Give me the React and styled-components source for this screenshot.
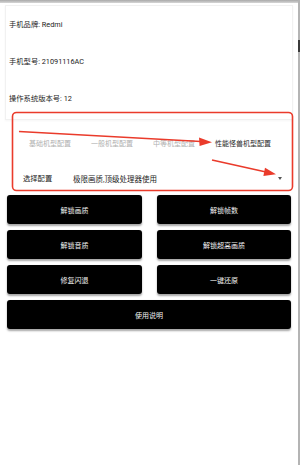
import React from 'react'
import styled, { createGlobalStyle } from 'styled-components'

const GlobalStyle = createGlobalStyle`
html, body {
  margin: 0;
  padding: 0;
  background: #ffffff;
}
body {
  font-family: Roboto, "Noto Sans CJK SC", sans-serif;
}
`

const Screen = styled.div`
position: relative;
width: 300px;
height: 465px;
display: flex;
flex-direction: row;
overflow: hidden;
background: #ffffff;
`

const Main = styled.div`
width: 298px;
display: flex;
flex-direction: column;
`

const Edge = styled.div`
width: 2px;
background: #b4b4b4;
display: flex;
flex-direction: column;
`

const EdgeThumb = styled.div`
margin-top: 40px;
height: 12px;
background: #3a3a3a;
`

const TopShade = styled.div`
height: 3px;
background: linear-gradient(#a9a9a9, #d6d6d6);
`

const InfoCard = styled.div`
margin: 2px 5px 0 5px;
padding: 13px 3px 14px 3px;
border: 1px solid #f1f1f1;
box-shadow: 0 1px 2px rgba(0, 0, 0, 0.04);
display: flex;
flex-direction: column;
gap: 25px;
`

const InfoLine = styled.div`
font-size: 7.3px;
line-height: 12px;
color: #222;
`

const TabRow = styled.div`
margin-top: 17px;
padding-left: 19px;
display: flex;
flex-direction: row;
`

const Tab = styled.div`
padding: 0 10px;
font-size: 7px;
line-height: 14px;
white-space: nowrap;
color: ${({ active }) => (active ? '#2a2a2a' : '#b0b0b0')};
&:first-child { padding-left: 10px; }
`

const SelectRow = styled.div`
margin-top: 20px;
margin-left: 23px;
margin-right: 16px;
display: flex;
flex-direction: row;
align-items: center;
height: 14px;
font-size: 7.3px;
color: #222;
`

const SelectLabel = styled.div`
width: 50px;
`

const SelectValue = styled.div`
flex: 1;
font-size: 7.5px;
`

const Caret = styled.div`
width: 0;
height: 0;
border-left: 2.5px solid transparent;
border-right: 2.5px solid transparent;
border-top: 3px solid #555;
margin-top: 1px;
`

const ButtonGrid = styled.div`
margin: 10px 7px 0 7px;
display: grid;
grid-template-columns: 135px 134px;
column-gap: 15px;
row-gap: 6px;
`

const ActionButton = styled.div`
grid-column: ${({ wide }) => (wide ? '1 / span 2' : 'auto')};
height: 29px;
background: #000;
border-radius: 3px;
box-shadow: 0 1.5px 2px rgba(0, 0, 0, 0.35);
color: #f2f2f2;
font-size: 7px;
display: flex;
align-items: center;
justify-content: center;
`

const Annotation = styled.svg`
position: absolute;
left: 0;
top: 0;
width: 300px;
height: 465px;
pointer-events: none;
`

const info = ['手机品牌: Redmi', '手机型号: 21091116AC', '操作系统版本号: 12']
const tabs = ['基础机型配置', '一般机型配置', '中等机型配置', '性能怪兽机型配置']
const actions = ['解锁画质', '解锁帧数', '解锁音质', '解锁超高画质', '修复闪退', '一键还原']

function App() {
  return (
    <Screen>
      <GlobalStyle />
      <Main>
        <TopShade />
        <InfoCard>
          {info.map((line, i) => (
            <InfoLine key={i}>{line}</InfoLine>
          ))}
        </InfoCard>
        <TabRow>
          {tabs.map((t, i) => (
            <Tab key={i} active={i === 3}>{t}</Tab>
          ))}
        </TabRow>
        <SelectRow>
          <SelectLabel>选择配置</SelectLabel>
          <SelectValue>极限画质,顶级处理器使用</SelectValue>
          <Caret />
        </SelectRow>
        <ButtonGrid>
          {actions.map((a, i) => (
            <ActionButton key={i}>{a}</ActionButton>
          ))}
          <ActionButton wide>使用说明</ActionButton>
        </ButtonGrid>
      </Main>
      <Edge>
        <EdgeThumb />
      </Edge>
      <Annotation viewBox="0 0 300 465">
        <rect x="12.5" y="112.5" width="280" height="78" rx="4" fill="none" stroke="#ea3b2b" strokeWidth="1.6" />
        <line x1="19" y1="131.5" x2="201" y2="141.5" stroke="#ea3b2b" strokeWidth="1.6" />
        <polygon points="212,142.2 199,137.6 199.6,146" fill="#ea3b2b" />
        <line x1="212" y1="160" x2="266" y2="172" stroke="#ea3b2b" strokeWidth="1.6" />
        <polygon points="276,174.3 265,167.8 263.4,176" fill="#ea3b2b" />
      </Annotation>
    </Screen>
  )
}

export default App
